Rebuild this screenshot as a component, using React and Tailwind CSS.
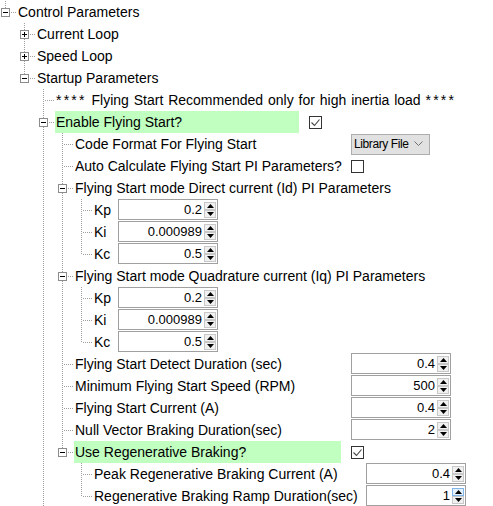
import React from "react";

const LINE = "#a0a0a0";

const tree = {
  text: "Control Parameters",
  last: true,
  children: [
    { text: "Current Loop", collapsed: true },
    { text: "Speed Loop", collapsed: true },
    {
      text: "Startup Parameters",
      last: true,
      children: [
        { text: "**** Flying Start Recommended only for high inertia load ****", stars: true },
        {
          text: "Enable Flying Start?",
          green: true,
          last: false, // more settings below the fold
          labelW: "w-[244px]",
          control: { type: "check", checked: true },
          children: [
            { text: "Code Format For Flying Start", labelW: "w-[267px]", control: { type: "select", value: "Library File" } },
            { text: "Auto Calculate Flying Start PI Parameters?", labelW: "w-[267px]", control: { type: "check", checked: false } },
            {
              text: "Flying Start mode Direct current (Id) PI Parameters",
              children: [
                { text: "Kp", labelW: "w-[15px]", control: { type: "spin", value: "0.2" } },
                { text: "Ki", labelW: "w-[15px]", control: { type: "spin", value: "0.000989" } },
                { text: "Kc", labelW: "w-[15px]", control: { type: "spin", value: "0.5" } },
              ],
            },
            {
              text: "Flying Start mode Quadrature current (Iq) PI Parameters",
              children: [
                { text: "Kp", labelW: "w-[15px]", control: { type: "spin", value: "0.2" } },
                { text: "Ki", labelW: "w-[15px]", control: { type: "spin", value: "0.000989" } },
                { text: "Kc", labelW: "w-[15px]", control: { type: "spin", value: "0.5" } },
              ],
            },
            { text: "Flying Start Detect Duration (sec)", labelW: "w-[267px]", control: { type: "spin", value: "0.4" } },
            { text: "Minimum Flying Start Speed (RPM)", labelW: "w-[267px]", control: { type: "spin", value: "500" } },
            { text: "Flying Start Current (A)", labelW: "w-[267px]", control: { type: "spin", value: "0.4" } },
            { text: "Null Vector Braking Duration(sec)", labelW: "w-[267px]", control: { type: "spin", value: "2" } },
            {
              text: "Use Regenerative Braking?",
              green: true,
              labelW: "w-[267px]",
              control: { type: "check", checked: true },
              children: [
                { text: "Peak Regenerative Braking Current (A)", labelW: "w-[263px]", control: { type: "spin", value: "0.4" } },
                { text: "Regenerative Braking Ramp Duration(sec)", labelW: "w-[263px]", control: { type: "spin", value: "1", hover: true } },
              ],
            },
          ],
        },
      ],
    },
  ],
};

function flatten(node, depth, guides, last, out) {
  out.push({ ...node, depth, guides, last });
  if (node.children) {
    const n = node.children.length;
    node.children.forEach((c, i) => {
      const isLast = c.last !== undefined ? c.last : i === n - 1;
      flatten(c, depth + 1, [...guides, !last], isLast, out);
    });
  }
  return out;
}

function Guide({ on }) {
  return (
    <svg width="19" height="22" className="shrink-0">
      {on && <line x1="5.5" y1="0" x2="5.5" y2="22" stroke={LINE} strokeDasharray="1 1" shapeRendering="crispEdges" />}
    </svg>
  );
}

function Connector({ last, expander }) {
  return (
    <svg width="17" height="22" className="shrink-0">
      <line x1="5.5" y1="0" x2="5.5" y2={last ? 11 : 22} stroke={LINE} strokeDasharray="1 1" shapeRendering="crispEdges" />
      <line x1="6" y1="11.5" x2="17" y2="11.5" stroke={LINE} strokeDasharray="1 1" strokeDashoffset="1" shapeRendering="crispEdges" />
      {expander && (
        <g shapeRendering="crispEdges">
          <rect x="1.5" y="7.5" width="8" height="8" fill="#fff" stroke="#8c8c8c" />
          <line x1="3" y1="11.5" x2="8" y2="11.5" stroke="#000" />
          {expander === "plus" && <line x1="5.5" y1="9" x2="5.5" y2="14" stroke="#000" />}
        </g>
      )}
    </svg>
  );
}

function Check({ checked }) {
  return (
    <div className="w-[13px] h-[13px] border border-[#333] bg-white flex items-center justify-center">
      {checked && (
        <svg width="11" height="11">
          <path d="M1.5 5.5 L4.5 8.5 L9.5 2.5" fill="none" stroke="#444" strokeWidth="1.1" />
        </svg>
      )}
    </div>
  );
}

function Select({ value }) {
  return (
    <div className="w-[79px] h-[21px] border border-[#adadad] bg-[#e1e1e1] flex items-center justify-between pl-[2px] pr-[6px] text-[12px] tracking-[-0.4px] text-black">
      <span>{value}</span>
      <svg width="9" height="6">
        <path d="M0.5 0.5 L4.5 4.5 L8.5 0.5" fill="none" stroke="#707070" />
      </svg>
    </div>
  );
}

function Spin({ value, hover }) {
  const btn = "w-[12px] h-[8px] flex items-center justify-center border";
  return (
    <div className="self-start w-[100px] h-[21px] border border-[#a0a0a0] bg-white flex items-center">
      <span className="flex-1 text-right pr-[2px] text-[13px] text-black">{value}</span>
      <div className="flex flex-col mr-[1px]">
        <div className={`${btn} ${hover ? "border-[#7eb4ea] bg-[#e5f1fb]" : "border-[#c8c8c8] bg-[#f0f0f0]"}`}>
          <svg width="7" height="4">
            <path d="M0 4 L3.5 0 L7 4 Z" fill="#000" />
          </svg>
        </div>
        <div className={`${btn} border-[#c8c8c8] bg-[#f0f0f0]`}>
          <svg width="7" height="4">
            <path d="M0 0 L3.5 4 L7 0 Z" fill="#000" />
          </svg>
        </div>
      </div>
    </div>
  );
}

function Control({ c }) {
  if (c.type === "check") return <Check checked={c.checked} />;
  if (c.type === "select") return <Select value={c.value} />;
  return <Spin value={c.value} hover={c.hover} />;
}

function Label({ r }) {
  if (!r.stars) return r.text;
  // the asterisks are drawn wider in the original font
  return (
    <>
      <span className="tracking-[2.2px]">****</span>
      <span className="[word-spacing:1px]"> Flying Start Recommended only for high inertia load </span>
      <span className="tracking-[2.2px]">****</span>
    </>
  );
}

function Row({ r }) {
  const expander = r.children || r.collapsed ? (r.collapsed ? "plus" : "minus") : null;
  return (
    <div className="flex items-center h-[22px]">
      {r.guides.map((g, i) => (
        <Guide key={i} on={g} />
      ))}
      <Connector last={r.last} expander={expander} />
      <div
        className={`${r.labelW || ""} h-[22px] flex items-center pl-[1px] whitespace-pre shrink-0 ${r.green ? "bg-[#c0ffc0]" : ""}`}
      >
        <Label r={r} />
      </div>
      {r.control && (
        <div className="ml-[10px] flex self-stretch items-center">
          <Control c={r.control} />
        </div>
      )}
    </div>
  );
}

export default function App() {
  const rows = flatten(tree, 0, [], true, []);
  return (
    <div className="w-[493px] h-[506px] overflow-hidden bg-white pt-px font-['Liberation_Sans',Arial,sans-serif] text-[14px] text-black leading-none">
      {rows.map((r, i) => (
        <Row key={i} r={r} />
      ))}
    </div>
  );
}
